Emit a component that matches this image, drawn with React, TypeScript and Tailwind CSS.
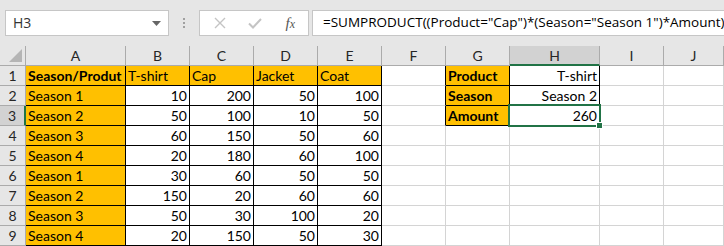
import React from "react";

const cols = ["A", "B", "C", "D", "E", "F", "G", "H", "I", "J"];

type Cell = { v?: string; bold?: boolean; orange?: boolean; right?: boolean; black?: boolean; blackR?: boolean; sel?: boolean };

const data: (string | number)[][] = [
  ["Season/Produt", "T-shirt", "Cap", "Jacket", "Coat"],
  ["Season 1", 10, 200, 50, 100],
  ["Season 2", 50, 100, 10, 50],
  ["Season 3", 60, 150, 50, 60],
  ["Season 4", 20, 180, 60, 100],
  ["Season 1", 30, 60, 50, 50],
  ["Season 2", 150, 20, 60, 60],
  ["Season 3", 50, 30, 100, 20],
  ["Season 4", 20, 150, 50, 30],
];

const side: [string, string][] = [
  ["Product", "T-shirt"],
  ["Season", "Season 2"],
  ["Amount", "260"],
];

function buildRow(r: number): Cell[] {
  const row: Cell[] = [];
  const d = data[r];
  for (let c = 0; c < 5; c++) {
    const v = d[c];
    row.push({
      v: String(v),
      bold: r === 0 && c === 0,
      orange: r === 0 || c === 0,
      right: typeof v === "number",
      black: true,
    });
  }
  row.push({ blackR: r < 3 });
  if (r < 3) {
    row.push({ v: side[r][0], bold: true, orange: true, black: true });
    row.push({ v: side[r][1], right: true, black: true, sel: r === 2 });
  } else {
    row.push({});
    row.push({});
  }
  row.push({});
  row.push({});
  return row;
}

export default function App() {
  return (
    <div className="w-[724px] h-[246px] overflow-hidden bg-[#e6e6e6] relative" style={{ fontFamily: "Lato, 'Liberation Sans', sans-serif" }}>
      {/* Formula bar */}
      <div className="h-[46px] flex items-start pt-[10px] pl-[5px]">
        <div className="shrink-0 w-[164px] h-[26px] bg-white border border-[#c6c6c6] flex items-center justify-between pl-[7px] pr-[7px]">
          <span className="text-[14px] text-[#333] leading-none" style={{ fontFamily: "'Open Sans', sans-serif" }}>H3</span>
          <svg width="9" height="5" viewBox="0 0 9 5"><path d="M0 0 L9 0 L4.5 5 Z" fill="#666" /></svg>
        </div>
        <div className="shrink-0 w-[30px] h-[26px] flex flex-col items-center justify-center gap-[2px]">
          <div className="w-[2px] h-[2px] bg-[#a0a0a0]" />
          <div className="w-[2px] h-[2px] bg-[#a0a0a0]" />
          <div className="w-[2px] h-[2px] bg-[#a0a0a0]" />
        </div>
        <div className="shrink-0 w-[110px] h-[26px] bg-white border border-[#c6c6c6] flex items-center">
          <div className="w-[36px] flex justify-center ml-[2px]">
            <svg width="12" height="12" viewBox="0 0 12 12"><path d="M1 1 L11 11 M11 1 L1 11" stroke="#c4c4c4" strokeWidth="1.4" /></svg>
          </div>
          <div className="w-[36px] flex justify-center">
            <svg width="14" height="11" viewBox="0 0 14 11"><path d="M1 5.5 L5 9.5 L13 1" stroke="#c4c4c4" strokeWidth="2" fill="none" /></svg>
          </div>
          <div className="w-[36px] flex justify-center">
            <span className="italic text-[15px] text-[#555] leading-none" style={{ fontFamily: "'Liberation Serif', serif" }}>f<span className="text-[12px]">x</span></span>
          </div>
        </div>
        <div className="ml-[3px] min-w-0 flex-1 h-[26px] bg-white border border-[#c6c6c6] border-r-0 flex items-center pl-[10px] overflow-hidden">
          <span className="text-[13.5px] text-black leading-none whitespace-nowrap" style={{ fontFamily: "'Open Sans', sans-serif" }}>=SUMPRODUCT((Product="Cap")*(Season="Season 1")*Amount)</span>
        </div>
      </div>
      {/* Grid */}
      <div className="grid grid-cols-[26px_100px_64px_64px_64px_64px_64px_64px_90px_64px_1fr] grid-rows-[20px_repeat(9,20px)] bg-white">
        <div className="bg-[#e6e6e6] border-r border-b border-[#ababab] relative">
          <svg className="absolute right-[3px] bottom-[3px]" width="13" height="13" viewBox="0 0 13 13"><path d="M13 0 L13 13 L0 13 Z" fill="#b5b5b5" /></svg>
        </div>
        {cols.map((c) => (
          <div
            key={c}
            className={
              c === "H"
                ? "bg-[#d2d2d2] border-r border-[#ababab] border-b-2 border-b-[#217346] flex items-center justify-center text-[14px] text-[#262626]"
                : "bg-[#e6e6e6] border-r border-b border-[#ababab] flex items-center justify-center text-[14px] text-[#262626]"
            }
          >
            {c}
          </div>
        ))}
        {data.map((_, r) => {
          const row = buildRow(r);
          return (
            <React.Fragment key={r}>
              <div
                className={
                  r === 2
                    ? "bg-[#d2d2d2] border-b border-[#ababab] border-r-2 border-r-[#217346] flex items-center justify-center text-[14px] text-[#262626]"
                    : "bg-[#e6e6e6] border-r border-b border-[#ababab] flex items-center justify-center text-[14px] text-[#262626]"
                }
              >
                {r + 1}
              </div>
              {row.map((cell, ci) => (
                <div
                  key={ci}
                  className={[
                    "relative flex items-center px-[2px] text-[14px] text-black whitespace-nowrap border-r border-b",
                    cell.black ? "border-black" : cell.blackR ? "border-r-black border-b-[#d4d4d4]" : "border-[#d4d4d4]",
                    cell.orange ? "bg-[#ffc000]" : "bg-white",
                    cell.bold ? "font-bold" : "",
                    cell.right ? "justify-end" : "justify-start",
                    cell.sel ? "z-10" : "",
                  ].join(" ")}
                >
                  {cell.v}
                  {cell.sel && (
                    <>
                      <div className="absolute left-[-2px] top-[-2px] w-[93px] h-[23px] border-2 border-[#217346] pointer-events-none" />
                      <div className="absolute left-[86px] top-[16px] w-[7px] h-[7px] bg-[#217346] border border-white" />
                    </>
                  )}
                </div>
              ))}
            </React.Fragment>
          );
        })}
      </div>
    </div>
  );
}
